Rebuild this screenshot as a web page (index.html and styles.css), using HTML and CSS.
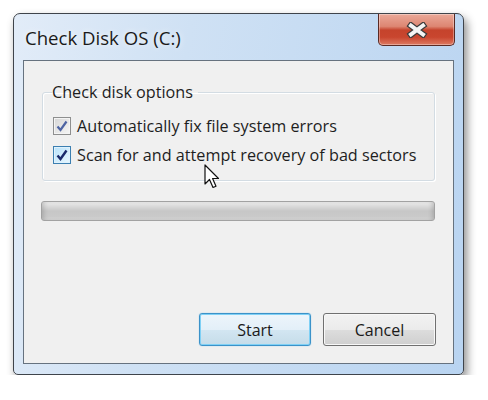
FILE: index.html
```html
<!DOCTYPE html>
<html lang="en">
<head>
    <meta charset="UTF-8">
    <meta name="viewport" content="width=device-width, initial-scale=1.0">
    <title>Check Disk OS (C:)</title>
    <link rel="stylesheet" href="styles.css">
</head>
<body>

    <div class="window">
        <div class="titlebar">
            <span class="title">Check Disk OS (C:)</span>
            <button class="close" aria-label="Close">
                <svg width="24" height="16" viewBox="0 0 24 16">
                    <path d="M6 3.5 L18 12.5 M18 3.5 L6 12.5" stroke="#3b3b3b" stroke-width="6.4" stroke-linecap="square"/>
                    <path d="M6 3.5 L18 12.5 M18 3.5 L6 12.5" stroke="#f4f4f4" stroke-width="4" stroke-linecap="square"/>
                </svg>
            </button>
        </div>

        <div class="client">
            <fieldset class="options">
                <legend>Check disk options</legend>
                <label class="option">
                    <span class="box box-idle">
                        <svg width="12" height="12" viewBox="0 0 12 12"><path d="M1.5 6.5 L4.5 10 L10.5 1.5" fill="none" stroke="#4e64a3" stroke-width="2.2"/></svg>
                    </span>
                    Automatically fix file system errors
                </label>
                <label class="option">
                    <span class="box box-hot">
                        <svg width="12" height="12" viewBox="0 0 12 12"><path d="M1.5 6.5 L4.5 10 L10.5 1.5" fill="none" stroke="#1b2a6b" stroke-width="2.4"/></svg>
                    </span>
                    Scan for and attempt recovery of bad sectors
                </label>
            </fieldset>

            <div class="progress"></div>

            <div class="buttons">
                <button class="btn btn-default">Start</button>
                <button class="btn">Cancel</button>
            </div>
        </div>
    </div>

    <!-- mouse pointer over the dialog -->
    <svg class="cursor" width="18" height="26" viewBox="0 0 18 26">
        <path d="M1 1 L1 20 L5.5 15.5 L9 23.5 L12 22.2 L8.6 14.5 L14.5 14.5 Z" fill="#fff" stroke="#111" stroke-width="1.2" stroke-linejoin="round"/>
    </svg>

</body>
</html>
```

FILE: styles.css
```css
body {
    font-family: "Open Sans", "Noto Sans", sans-serif;
    background-color: #ffffff;
    margin: 0;
    padding: 0;
    color: #1e1e1e;
}
.window {
    margin: 13px 0 0 13px;
    width: 451px;
    height: 362px;
    box-sizing: border-box;
    border: 1px solid #3f444b;
    border-radius: 7px 7px 5px 5px;
    background: linear-gradient(100deg, #e2ecf8 0%, #cfe1f4 35%, #b9d4f1 100%);
    box-shadow: 3px 5px 10px rgba(0, 0, 0, 0.45);
    padding: 0 9px 10px 9px;
    display: flex;
    flex-direction: column;
}
.titlebar {
    height: 46px;
    display: flex;
    justify-content: space-between;
    align-items: flex-start;
}
.title {
    font-size: 18.6px;
    margin: 11px 0 0 2px;
    color: #1a1a1a;
    text-shadow: 0 0 6px rgba(255, 255, 255, 0.9);
}
.close {
    width: 77px;
    height: 32px;
    margin: 0 -1px 0 0;
    padding: 0;
    border: 1px solid #5a2a24;
    border-top: none;
    border-radius: 0 0 5px 5px;
    background: linear-gradient(#eaa898 0%, #dd8672 40%, #c5432c 52%, #c9462f 75%, #dd7a62 100%);
    box-shadow: inset 0 0 0 1px rgba(255, 255, 255, 0.35);
    display: flex;
    align-items: center;
    justify-content: center;
}
.client {
    flex: 1;
    border: 1px solid #66727f;
    background-color: #f0f0f0;
    display: flex;
    flex-direction: column;
    font-size: 16.2px;
}
.options {
    margin: 21px 18px 0 18px;
    padding: 9px 10px 11px 10px;
    border: 1px solid #d3dce3;
    border-radius: 3px;
    box-shadow: inset 1px 1px 0 #ffffff, 1px 1px 0 #ffffff;
}
.options legend {
    padding: 0 5px 0 0;
    margin-left: -1px;
    line-height: 20px;
}
.option {
    display: flex;
    align-items: center;
    gap: 6px;
    height: 29px;
}
.box {
    width: 18px;
    height: 18px;
    box-sizing: border-box;
    display: flex;
    align-items: center;
    justify-content: center;
}
.box-idle {
    border: 1px solid #8e8f8f;
    background: linear-gradient(135deg, #d6d6d6, #f6f6f6);
    box-shadow: inset 0 0 0 1px #f4f4f4;
}
.box-hot {
    border: 1px solid #3c7fb1;
    background: linear-gradient(135deg, #b8e2fb, #e9f7fe);
    box-shadow: inset 0 0 0 1px #dff2fd;
}
.progress {
    margin: 20px 18px 0 17px;
    height: 20px;
    box-sizing: border-box;
    border: 1px solid #a2a2a2;
    border-radius: 3px;
    background: linear-gradient(#ececec 0%, #d9d9d9 25%, #c7c7c7 50%, #c9c9c9 80%, #d6d6d6 100%);
    box-shadow: inset 4px 0 4px -2px rgba(0, 0, 0, 0.15), inset -4px 0 4px -2px rgba(0, 0, 0, 0.15);
}
.buttons {
    margin-top: auto;
    margin-bottom: 17px;
    display: flex;
    justify-content: flex-end;
    gap: 12px;
    padding-right: 17px;
}
.btn {
    width: 113px;
    height: 33px;
    font-family: inherit;
    font-size: 16px;
    color: #1a1a1a;
    border: 1px solid #707070;
    border-radius: 3px;
    background: linear-gradient(#f2f2f2 0%, #ebebeb 50%, #dddddd 50%, #cfcfcf 100%);
    box-shadow: inset 0 0 0 1px #f8f8f8;
    padding: 0;
}
.btn-default {
    width: 112px;
    border-color: #3b92c9;
    background: linear-gradient(#edf5fb 0%, #e3eff8 50%, #d3e6f2 50%, #c5dce9 100%);
    box-shadow: inset 0 0 0 1px #7fd0f5, 0 0 1px #61b8e6;
}
.cursor {
    position: absolute;
    left: 204px;
    top: 164px;
}
```
